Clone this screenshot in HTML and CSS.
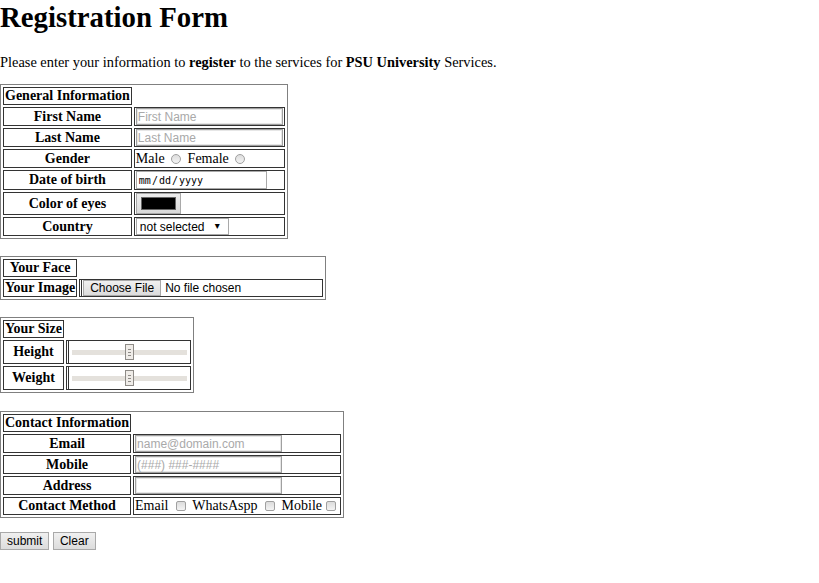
FILE: index.html
```html
<!DOCTYPE html>
<html lang="en">
<head>
<meta charset="utf-8">
<title>Registration Form</title>
<link rel="stylesheet" href="styles.css">
</head>
<body>
<h1 class="title">Registration Form</h1>
<p class="intro">Please enter your information to <b>register</b> to the services for <b>PSU University</b> Services.</p>
<form class="form">
<table class="sheet">
<tr><th>General Information</th></tr>
<tr><th>First Name</th><td class="ctl"><input class="field" type="text" placeholder="First Name"></td></tr>
<tr><th>Last Name</th><td class="ctl"><input class="field" type="text" placeholder="Last Name"></td></tr>
<tr><th>Gender</th><td class="opts">Male <input class="radio" type="radio" name="gender"> Female <input class="radio" type="radio" name="gender"></td></tr>
<tr><th>Date of birth</th><td class="ctl"><input class="date" type="date"></td></tr>
<tr><th>Color of eyes</th><td class="ctl"><input class="color" type="color" value="#000000"></td></tr>
<tr><th>Country</th><td class="ctl"><span class="select-wrap"><select class="select"><option>not selected</option></select></span></td></tr>
</table>
<table class="sheet">
<tr><th>Your Face</th></tr>
<tr><th>Your Image</th><td class="ctl boxed"><input class="file" type="file"></td></tr>
</table>
<table class="sheet sheet-size">
<tr><th>Your Size</th></tr>
<tr><th>Height</th><td class="boxed"><input class="range" type="range"></td></tr>
<tr><th>Weight</th><td class="boxed"><input class="range" type="range"></td></tr>
</table>
<table class="sheet">
<tr><th>Contact Information</th></tr>
<tr><th>Email</th><td class="ctl"><input class="field" type="email" placeholder="name@domain.com"></td></tr>
<tr><th>Mobile</th><td class="ctl"><input class="field" type="tel" placeholder="(###) ###-####"></td></tr>
<tr><th>Address</th><td class="ctl"><input class="field" type="text"></td></tr>
<tr><th>Contact Method</th><td class="opts opts-tight">Email <input class="check" type="checkbox"> WhatsAspp <input class="check" type="checkbox"> Mobile<input class="check" type="checkbox"></td></tr>
</table>
<div class="actions"><input class="btn" type="submit" value="submit"> <input class="btn" type="reset" value="Clear"></div>
</form>
</body>
</html>
```
FILE: styles.css
```css
html { background: #fff; }
body {
  margin: 0;
  font-family: "Liberation Serif", "Times New Roman", serif;
  font-size: 14.4px;
  color: #000;
}
.title {
  margin: 0 0 19px;
  font-size: 28.8px;
  line-height: 35px;
  font-weight: bold;
}
.intro {
  margin: 0 0 13px;
  line-height: 17px;
}
.form { margin: 0; }
.sheet {
  border: 1px solid #808080;
  border-spacing: 2px;
  margin: 0 0 17px;
  font-size: 14px;
}
.sheet-size { margin-bottom: 18px; }
.sheet th, .sheet td {
  border: 1px solid #333;
  padding: 1px;
  line-height: 14px;
  white-space: nowrap;
}
.sheet th { text-align: center; font-weight: bold; }
.sheet td { text-align: left; }
.sheet td.ctl { padding: 0 1px; }
.sheet td.opts { line-height: 15px; }
.sheet td.opts-tight { line-height: 14px; }
.sheet td.boxed { border-left: 3px double #333; }

.field {
  box-sizing: border-box;
  width: 147px;
  height: 17px;
  margin: 0;
  padding: 0 1px;
  border: 1px solid #a0a0a0;
  box-shadow: inset 0 0 0 1px #e6e6e6;
  font-family: "Liberation Sans", Arial, sans-serif;
  font-size: 12px;
  color: #000;
  vertical-align: top;
  outline: none;
}
.field::placeholder { color: #a9a9a9; }

.radio {
  appearance: none;
  width: 10px;
  height: 10px;
  margin: 0 3px;
  border: 1px solid #a0a0a0;
  border-radius: 50%;
  background: linear-gradient(#dcdcdc, #f4f4f4);
  vertical-align: -1px;
}
.check {
  appearance: none;
  width: 10px;
  height: 10px;
  margin: 0 3px 0 4px;
  border: 1px solid #a0a0a0;
  border-radius: 2px;
  background: linear-gradient(#dcdcdc, #f4f4f4);
  vertical-align: -1px;
}

.date {
  box-sizing: border-box;
  width: 131px;
  height: 18px;
  margin: 0;
  padding: 0 1px;
  border: 1px solid #a9a9a9;
  font-family: "DejaVu Sans Mono", monospace;
  font-size: 10px;
  color: #000;
  vertical-align: top;
}
.date::-webkit-calendar-picker-indicator { display: none; }
.date::-webkit-inner-spin-button { display: none; }
.date::-webkit-datetime-edit { padding: 0; }

.color {
  box-sizing: border-box;
  width: 45px;
  height: 21px;
  margin: 0;
  padding: 0;
  border: 1px solid #a9a9a9;
  background: linear-gradient(#ededed, #dadada);
  vertical-align: top;
}
.color::-webkit-color-swatch-wrapper { padding: 3px 4px; }
.color::-webkit-color-swatch { border: 1px solid #666; border-radius: 0; }

.select-wrap { position: relative; display: inline-block; vertical-align: top; }
.select-wrap::after {
  content: "\25BE";
  position: absolute;
  right: 9px;
  top: 1px;
  font-family: "DejaVu Sans", sans-serif;
  font-size: 10px;
  line-height: 14px;
  pointer-events: none;
}
.select {
  appearance: none;
  box-sizing: border-box;
  display: block;
  width: 93px;
  height: 17px;
  margin: 0;
  padding: 0 0 0 3px;
  border: 1px solid #a9a9a9;
  border-radius: 0;
  background: #fff;
  font-family: "Liberation Sans", Arial, sans-serif;
  font-size: 12px;
  color: #000;
}

.file {
  width: 238px;
  height: 16px;
  margin: 0;
  font-family: "Liberation Sans", Arial, sans-serif;
  font-size: 12px;
  color: #000;
  vertical-align: top;
}
.file::file-selector-button {
  margin: 0 4px 0 0;
  height: 16px;
  padding: 0 6px;
  border: 1px solid #a9a9a9;
  border-radius: 0;
  background: linear-gradient(#f0f0f0, #dcdcdc);
  font-family: "Liberation Sans", Arial, sans-serif;
  font-size: 12px;
  color: #000;
}

.range {
  appearance: none;
  width: 115px;
  height: 20px;
  margin: 0 2px;
  background: transparent;
  vertical-align: top;
}
.range::-webkit-slider-runnable-track {
  height: 5px;
  background: #e4e1dc;
  border: none;
}
.range::-webkit-slider-thumb {
  appearance: none;
  box-sizing: border-box;
  width: 9px;
  height: 16px;
  margin-top: -5.5px;
  border: 1px solid #8e8b87;
  background:
    linear-gradient(#8e8b87, #8e8b87) center 4px / 3px 1px no-repeat,
    linear-gradient(#8e8b87, #8e8b87) center 7px / 3px 1px no-repeat,
    linear-gradient(#8e8b87, #8e8b87) center 10px / 3px 1px no-repeat,
    #efece8;
}

.actions { margin-top: -3px; }
.btn {
  box-sizing: border-box;
  height: 18px;
  margin: 0;
  padding: 0 6px;
  border: 1px solid #a9a9a9;
  border-radius: 0;
  background: linear-gradient(#f0f0f0, #dcdcdc);
  font-family: "Liberation Sans", Arial, sans-serif;
  font-size: 12px;
  color: #000;
  vertical-align: top;
}
```
